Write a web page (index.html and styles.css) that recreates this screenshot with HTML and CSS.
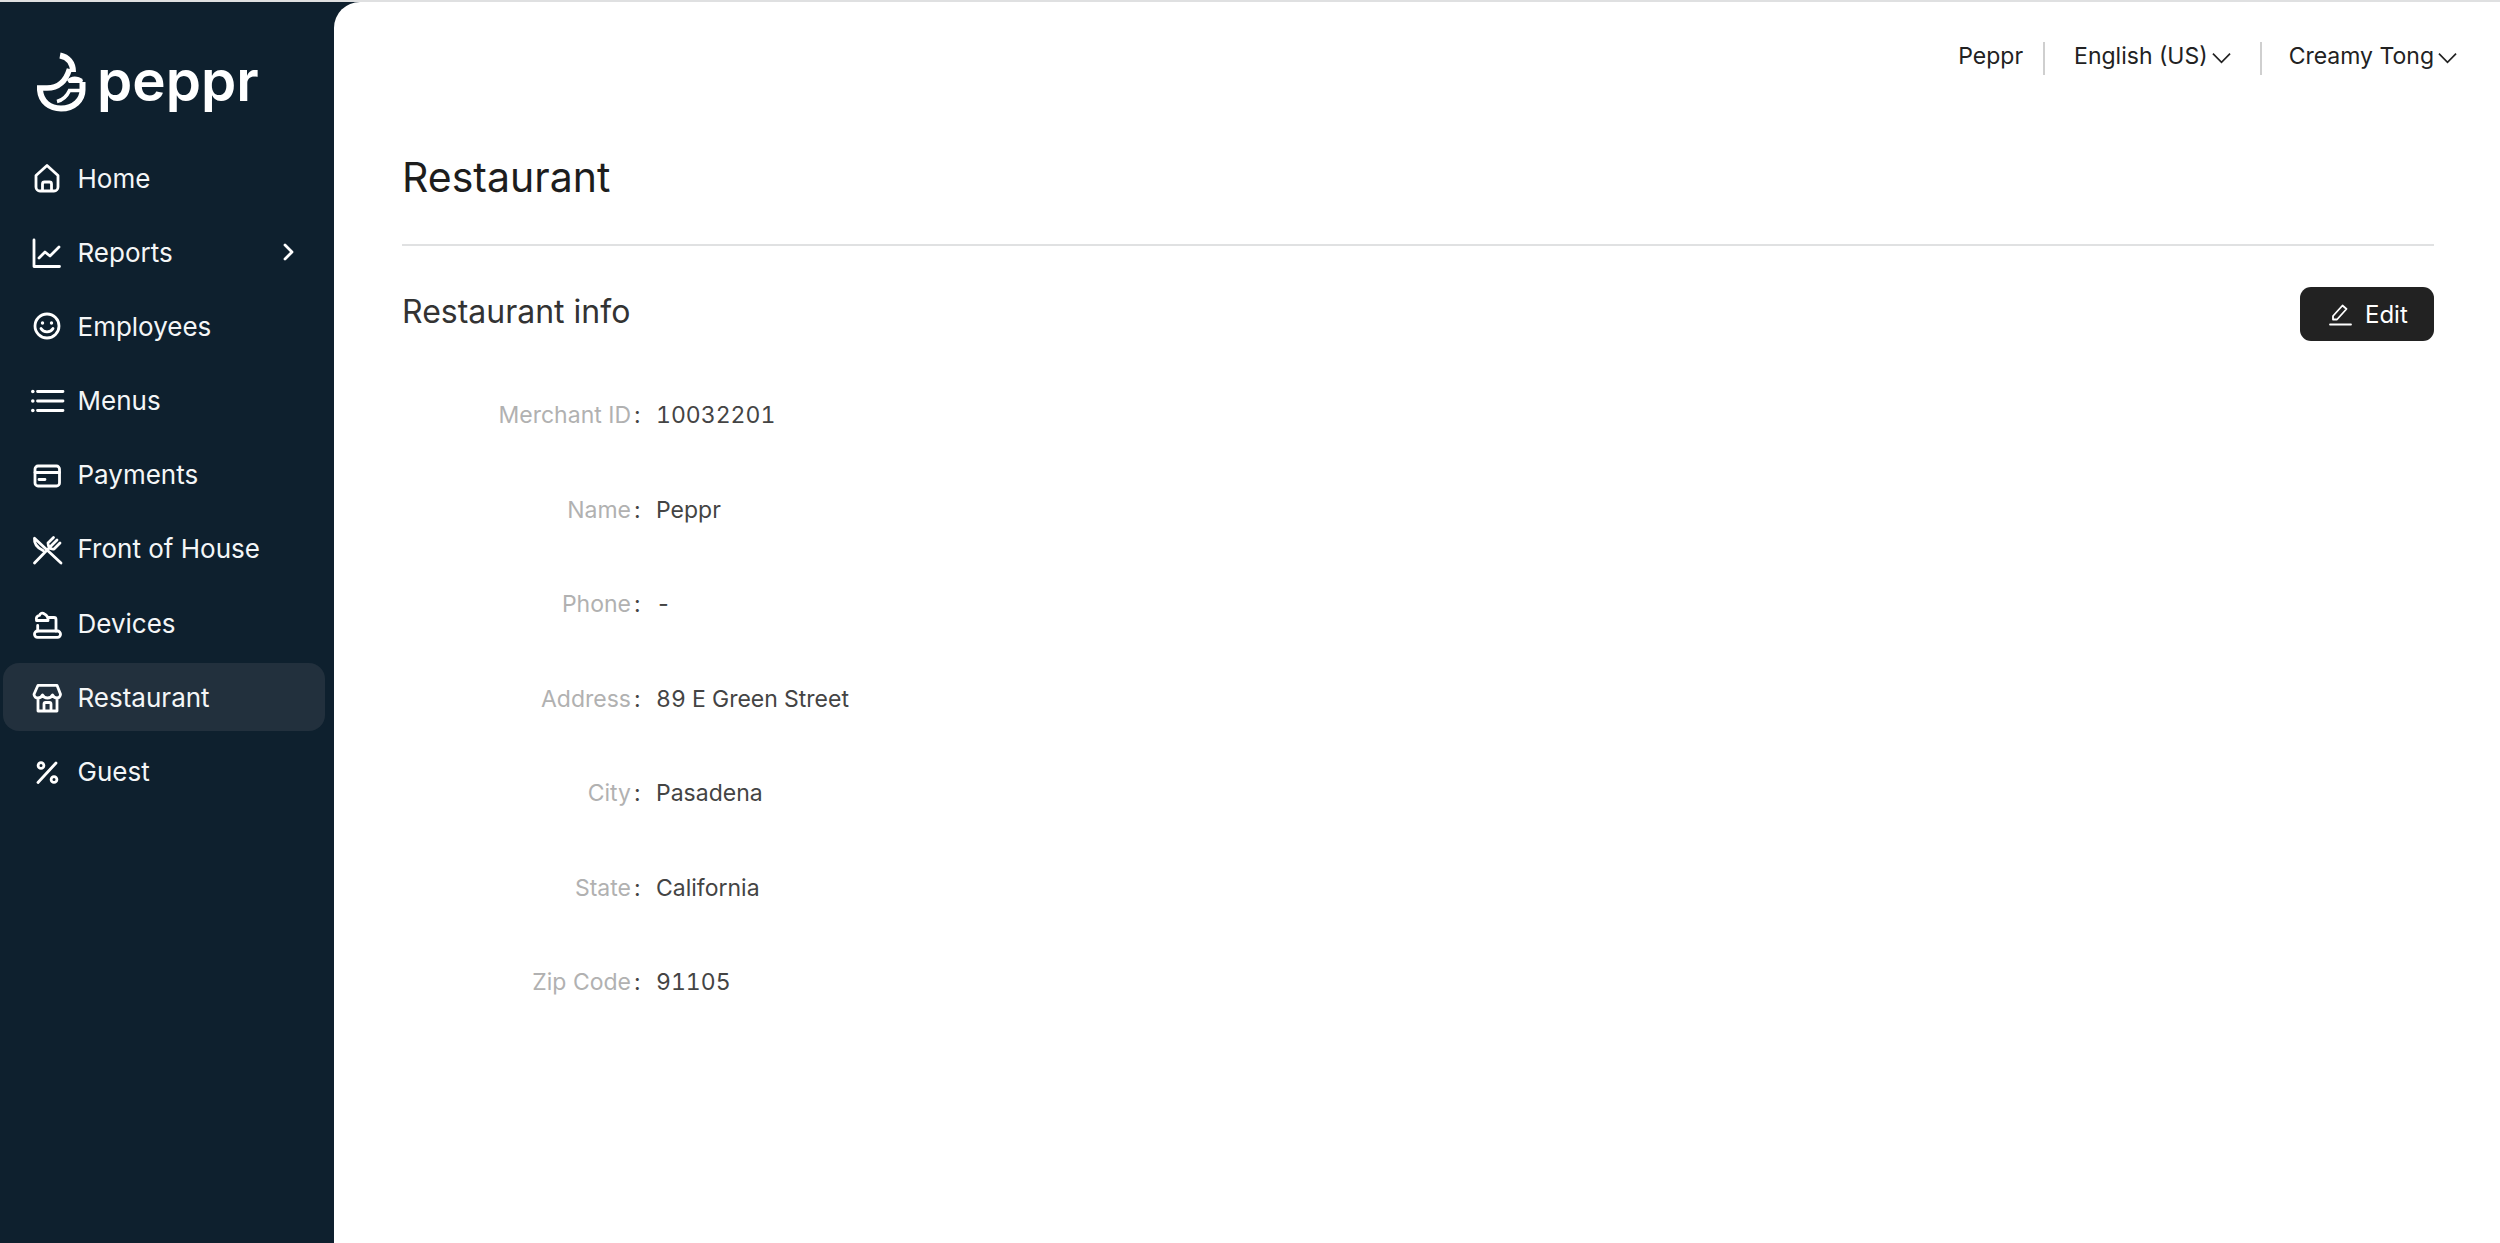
FILE: index.html
```html
<!DOCTYPE html>
<html lang="en">
<head>
<meta charset="utf-8">
<title>Restaurant - Peppr</title>
<link rel="stylesheet" href="styles.css">
</head>
<body>
<div class="app">
  <aside class="sidebar">
    <div class="logo">
      <svg class="logo-mark" viewBox="0 0 52 60" width="52" height="60" fill="none" stroke="#fff">
        <path d="M24 3.500C32 5 37 11 37 20" stroke-width="6"/>
        <path d="M1 36H11C20 36 29 32 33.500 17" stroke-width="5.500"/>
        <path d="M4 38C5 50 14 56.500 25 56.500C38 56.500 46.500 48 46.500 38V30" stroke-width="6"/>
        <path d="M21 49.500C27 48 31 44 33.500 38.500H49" stroke-width="3.500"/>
        <path d="M31 28C34 24 42 23 47 28L46 31H33z" fill="#fff" stroke="none"/>
      </svg>
      <span class="logo-text">peppr</span>
    </div>
    <nav class="nav">
      <a class="nav-item">
        <svg class="icon" viewBox="0 0 36 36"><path d="M7 15.500 18 5.500l11 10V27a4 4 0 0 1-4 4H11a4 4 0 0 1-4-4zM13.500 31v-7a2 2 0 0 1 2-2h5a2 2 0 0 1 2 2v7"/></svg>
        <span>Home</span>
      </a>
      <a class="nav-item">
        <svg class="icon" viewBox="0 0 36 36"><path d="M5 6v26.500H30.500M10 24l6-6 5 4 9-9"/></svg>
        <span>Reports</span>
        <svg class="nav-arrow" viewBox="0 0 12 18"><path d="M2 2l7 7-7 7"/></svg>
      </a>
      <a class="nav-item">
        <svg class="icon" viewBox="0 0 36 36"><circle cx="18" cy="18" r="12"/><path d="M12 20.500c2.500 4.500 9.500 4.500 12 0"/><circle class="dot" cx="13.500" cy="15" r="1.700"/><circle class="dot" cx="22.500" cy="15" r="1.700"/></svg>
        <span>Employees</span>
      </a>
      <a class="nav-item">
        <svg class="icon" viewBox="0 0 36 36"><path d="M8.500 8.500h25.500M8.500 18h25.500M8.500 27.500h25.500"/><circle class="dot" cx="3.800" cy="8.500" r="1.800"/><circle class="dot" cx="3.800" cy="18" r="1.800"/><circle class="dot" cx="3.800" cy="27.500" r="1.800"/></svg>
        <span>Menus</span>
      </a>
      <a class="nav-item">
        <svg class="icon" viewBox="0 0 36 36"><rect x="6" y="9" width="24.500" height="20" rx="3"/><path d="M6 15.500h24.500M10 22.500h6"/></svg>
        <span>Payments</span>
      </a>
      <a class="nav-item">
        <svg class="icon" viewBox="0 0 36 36"><path d="M5.500 7.300 32 32M5.500 7.300C5 12 8 16.500 14 19.500M5.500 32 22 15M19 12l5.500-5.500M22 15l6-6M25 18l6-6M19 12c0 4 2 6.500 6 6"/></svg>
        <span>Front of House</span>
      </a>
      <a class="nav-item">
        <svg class="icon" viewBox="0 0 36 36"><path d="M7.500 15.500c-1-3 1-5 3-5.200.5-2 3-3 4.500-1.500 2 1 4.500 3 4 6.700zM20 12.500h5a2 2 0 0 1 2 2V26M8.700 20.500V26"/><rect x="5.500" y="26" width="26" height="6.300" rx="3"/></svg>
        <span>Devices</span>
      </a>
      <a class="nav-item is-active">
        <svg class="icon" viewBox="0 0 36 36"><path d="M9 6.300h19l3.500 9c0 2.500-2 3.700-3.500 3.700s-3.500-1-4.500-3c-1 2-3 3-5 3s-4-1-5-3c-1 2-2.500 3-4.500 3s-4-1.200-4-3.700zM9 19v13h19V19M15 32v-7a1.500 1.500 0 0 1 1.500-1.500h4A1.500 1.500 0 0 1 22 25v7"/></svg>
        <span>Restaurant</span>
      </a>
      <a class="nav-item">
        <svg class="icon" viewBox="0 0 36 36"><path d="M9 28.500 27 9"/><circle cx="12" cy="11.500" r="2.900"/><circle cx="25" cy="25.500" r="2.900"/></svg>
        <span>Guest</span>
      </a>
    </nav>
  </aside>

  <main class="main">
    <header class="topbar">
      <span class="topbar-item">Peppr</span>
      <span class="topbar-sep"></span>
      <span class="topbar-item">English (US)<svg class="chev" viewBox="0 0 20 12"><path d="M1 1.500l9 9 9-9"/></svg></span>
      <span class="topbar-sep topbar-sep-wide"></span>
      <span class="topbar-item">Creamy Tong<svg class="chev" viewBox="0 0 20 12"><path d="M1 1.500l9 9 9-9"/></svg></span>
    </header>

    <div class="content">
      <h1 class="page-title">Restaurant</h1>
      <section class="section">
        <div class="section-head">
          <h2 class="section-title">Restaurant info</h2>
          <button class="edit-btn" type="button">
            <svg class="edit-icon" viewBox="0 0 24 24"><path d="M5 17.500V14L14.500 3.500l4 3.500L9 17.500zM2 22.500h21"/></svg>
            Edit
          </button>
        </div>
        <dl class="details">
          <div class="row"><dt>Merchant ID</dt><dd>10032201</dd></div>
          <div class="row"><dt>Name</dt><dd>Peppr</dd></div>
          <div class="row"><dt>Phone</dt><dd>-</dd></div>
          <div class="row"><dt>Address</dt><dd>89 E Green Street</dd></div>
          <div class="row"><dt>City</dt><dd>Pasadena</dd></div>
          <div class="row"><dt>State</dt><dd>California</dd></div>
          <div class="row"><dt>Zip Code</dt><dd>91105</dd></div>
        </dl>
      </section>
    </div>
  </main>
</div>
</body>
</html>
```

FILE: styles.css
```css
* { box-sizing: border-box; }
html, body { height: 100%; }
body {
  margin: 0;
  font-family: Inter, "Liberation Sans", sans-serif;
  background: #0e202e;
  overflow: hidden;
}
.app {
  display: flex;
  height: 100%;
  border-top: 2px solid #dfe0e1;
}
.sidebar {
  flex: 0 0 334px;
  background: #0e202e;
  color: #fff;
  padding: 50px 9px 0 3px;
}
.logo {
  display: flex;
  align-items: flex-start;
  gap: 9px;
  height: 92px;
  padding-left: 33px;
}
.logo-mark { flex: none; }
.logo-text {
  font-family: Inter, sans-serif;
  font-weight: 600;
  font-size: 56.5px;
  line-height: 60px;
  margin-top: -1px;
}
.nav { display: flex; flex-direction: column; gap: 6.2px; }
.nav-item {
  display: flex;
  align-items: center;
  height: 68px;
  padding-left: 26px;
  gap: 12.5px;
  font-size: 26px;
  color: #f4f6f7;
  border-radius: 16px;
}
.nav-item.is-active { background: #22303d; }
.icon {
  flex: none;
  width: 36px;
  height: 36px;
  fill: none;
  stroke: #fff;
  stroke-width: 2.800;
  stroke-linecap: round;
  stroke-linejoin: round;
}
.icon .dot { fill: #fff; stroke: none; }
.nav-arrow {
  width: 12px;
  height: 18px;
  margin-left: auto;
  margin-right: 30px;
  fill: none;
  stroke: #fff;
  stroke-width: 2.800;
  stroke-linecap: round;
  stroke-linejoin: round;
}
.main {
  flex: 1;
  min-width: 0;
  background: #fff;
  border-top-left-radius: 26px;
  padding-right: 43px;
}
.topbar {
  display: flex;
  justify-content: flex-end;
  align-items: center;
  height: 33px;
  margin-top: 40px;
  color: #222;
  font-size: 23px;
}
.topbar-sep {
  width: 2px;
  height: 33px;
  background: #cfcfcf;
  margin: 0 29px 0 20px;
}
.topbar-sep-wide { margin: 0 27px 0 29px; }
.topbar-item {
  display: flex;
  align-items: center;
  gap: 4px;
  white-space: nowrap;
  margin-bottom: 6px;
}
.chev {
  width: 19px;
  height: 12px;
  margin-top: 4px;
  fill: none;
  stroke: #222;
  stroke-width: 1.800;
}
.content { padding: 0 23px 0 68px; }
.page-title {
  margin: 78px 0 0;
  padding-bottom: 43px;
  border-bottom: 2px solid #e0e1e2;
  font-size: 41px;
  line-height: 48px;
  font-weight: 400;
  color: #1d1d1d;
}
.section { margin-top: 41px; }
.section-head {
  display: flex;
  justify-content: space-between;
  align-items: center;
  height: 54px;
}
.section-title {
  margin: 0 0 4px;
  font-size: 32px;
  line-height: 40px;
  font-weight: 400;
  color: #333;
}
.edit-btn {
  display: flex;
  align-items: center;
  gap: 13px;
  width: 134px;
  height: 54px;
  padding: 0 0 0 28px;
  border: 0;
  border-radius: 11px;
  background: #222;
  color: #fff;
  font: 400 24px Inter, sans-serif;
}
.edit-icon {
  width: 24px;
  height: 24px;
  fill: none;
  stroke: #fff;
  stroke-width: 1.800;
  stroke-linejoin: round;
  stroke-linecap: round;
}
.details {
  margin: 57px 0 0;
  display: flex;
  flex-direction: column;
  gap: 60.5px;
}
.row {
  display: flex;
  align-items: center;
  height: 34px;
  font-size: 23px;
  line-height: 34px;
}
.row dt {
  position: relative;
  width: 229px;
  text-align: right;
  color: #b1b1b1;
}
.row dt::after {
  content: ":";
  position: absolute;
  left: 100%;
  margin-left: 3px;
  color: #444;
}
.row dd {
  margin: 0 0 0 25px;
  color: #444;
  font-variant-numeric: tabular-nums;
}
```
